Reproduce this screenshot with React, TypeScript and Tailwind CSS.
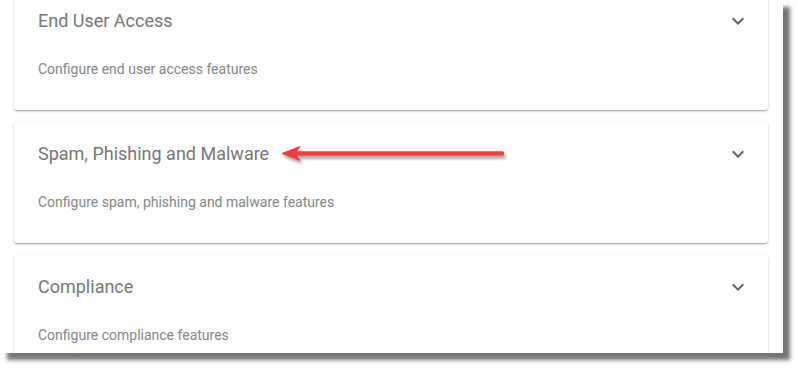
import React from "react";

const panels = [
  { title: "End User Access", desc: "Configure end user access features" },
  { title: "Spam, Phishing and Malware", desc: "Configure spam, phishing and malware features" },
  { title: "Compliance", desc: "Configure compliance features" },
];

function ExpandMore() {
  return (
    <svg width="24" height="24" viewBox="0 0 24 24" className="text-[#646464]">
      <path fill="currentColor" d="M16.59 8.59L12 13.17 7.41 8.59 6 10l6 6 6-6z" />
    </svg>
  );
}

function Panel({ title, desc }: { title: string; desc: string }) {
  return (
    <div className="w-full bg-white rounded-[3px] shadow-[0_1px_3px_rgba(0,0,0,0.2),0_1px_1px_rgba(0,0,0,0.14),0_2px_1px_-1px_rgba(0,0,0,0.12)]">
      <div className="h-16 flex items-center justify-between pl-6 pr-[18px]">
        <p className="text-[18px] text-[#777777] -mt-[2px]">{title}</p>
        <ExpandMore />
      </div>
      <div className="px-6 pt-[6px] pb-[31px]">
        <p className="text-sm leading-5 text-[#868686]">{desc}</p>
      </div>
    </div>
  );
}

function Arrow() {
  return (
    <svg className="absolute left-0 top-0 pointer-events-none" width="783" height="353">
      <defs>
        <filter id="arrowShadow" x="-10%" y="-100%" width="120%" height="400%">
          <feDropShadow dx="2" dy="3" stdDeviation="1.8" floodColor="#000" floodOpacity="0.35" />
        </filter>
      </defs>
      <g filter="url(#arrowShadow)" fill="#ef3d3f" stroke="#ef3d3f">
        <line x1="294" y1="153.5" x2="502" y2="153.5" strokeWidth="4.5" strokeLinecap="round" />
        <path d="M282 153.5 L300 146.5 L295 153.5 L300 160.5 Z" strokeWidth="1" strokeLinejoin="round" />
      </g>
    </svg>
  );
}

export default function App() {
  return (
    <div className="w-[798px] h-[370px] bg-white" style={{ fontFamily: "Roboto, 'Noto Sans', sans-serif" }}>
      <div className="relative w-[783px] h-[353px] overflow-hidden bg-white shadow-[7px_7px_4px_rgba(0,0,0,0.55)]">
        <div className="flex flex-col gap-3 pl-[14px] pr-[15px] -mt-[11px]">
          {panels.map((p) => (
            <Panel key={p.title} title={p.title} desc={p.desc} />
          ))}
        </div>
        <Arrow />
      </div>
    </div>
  );
}
